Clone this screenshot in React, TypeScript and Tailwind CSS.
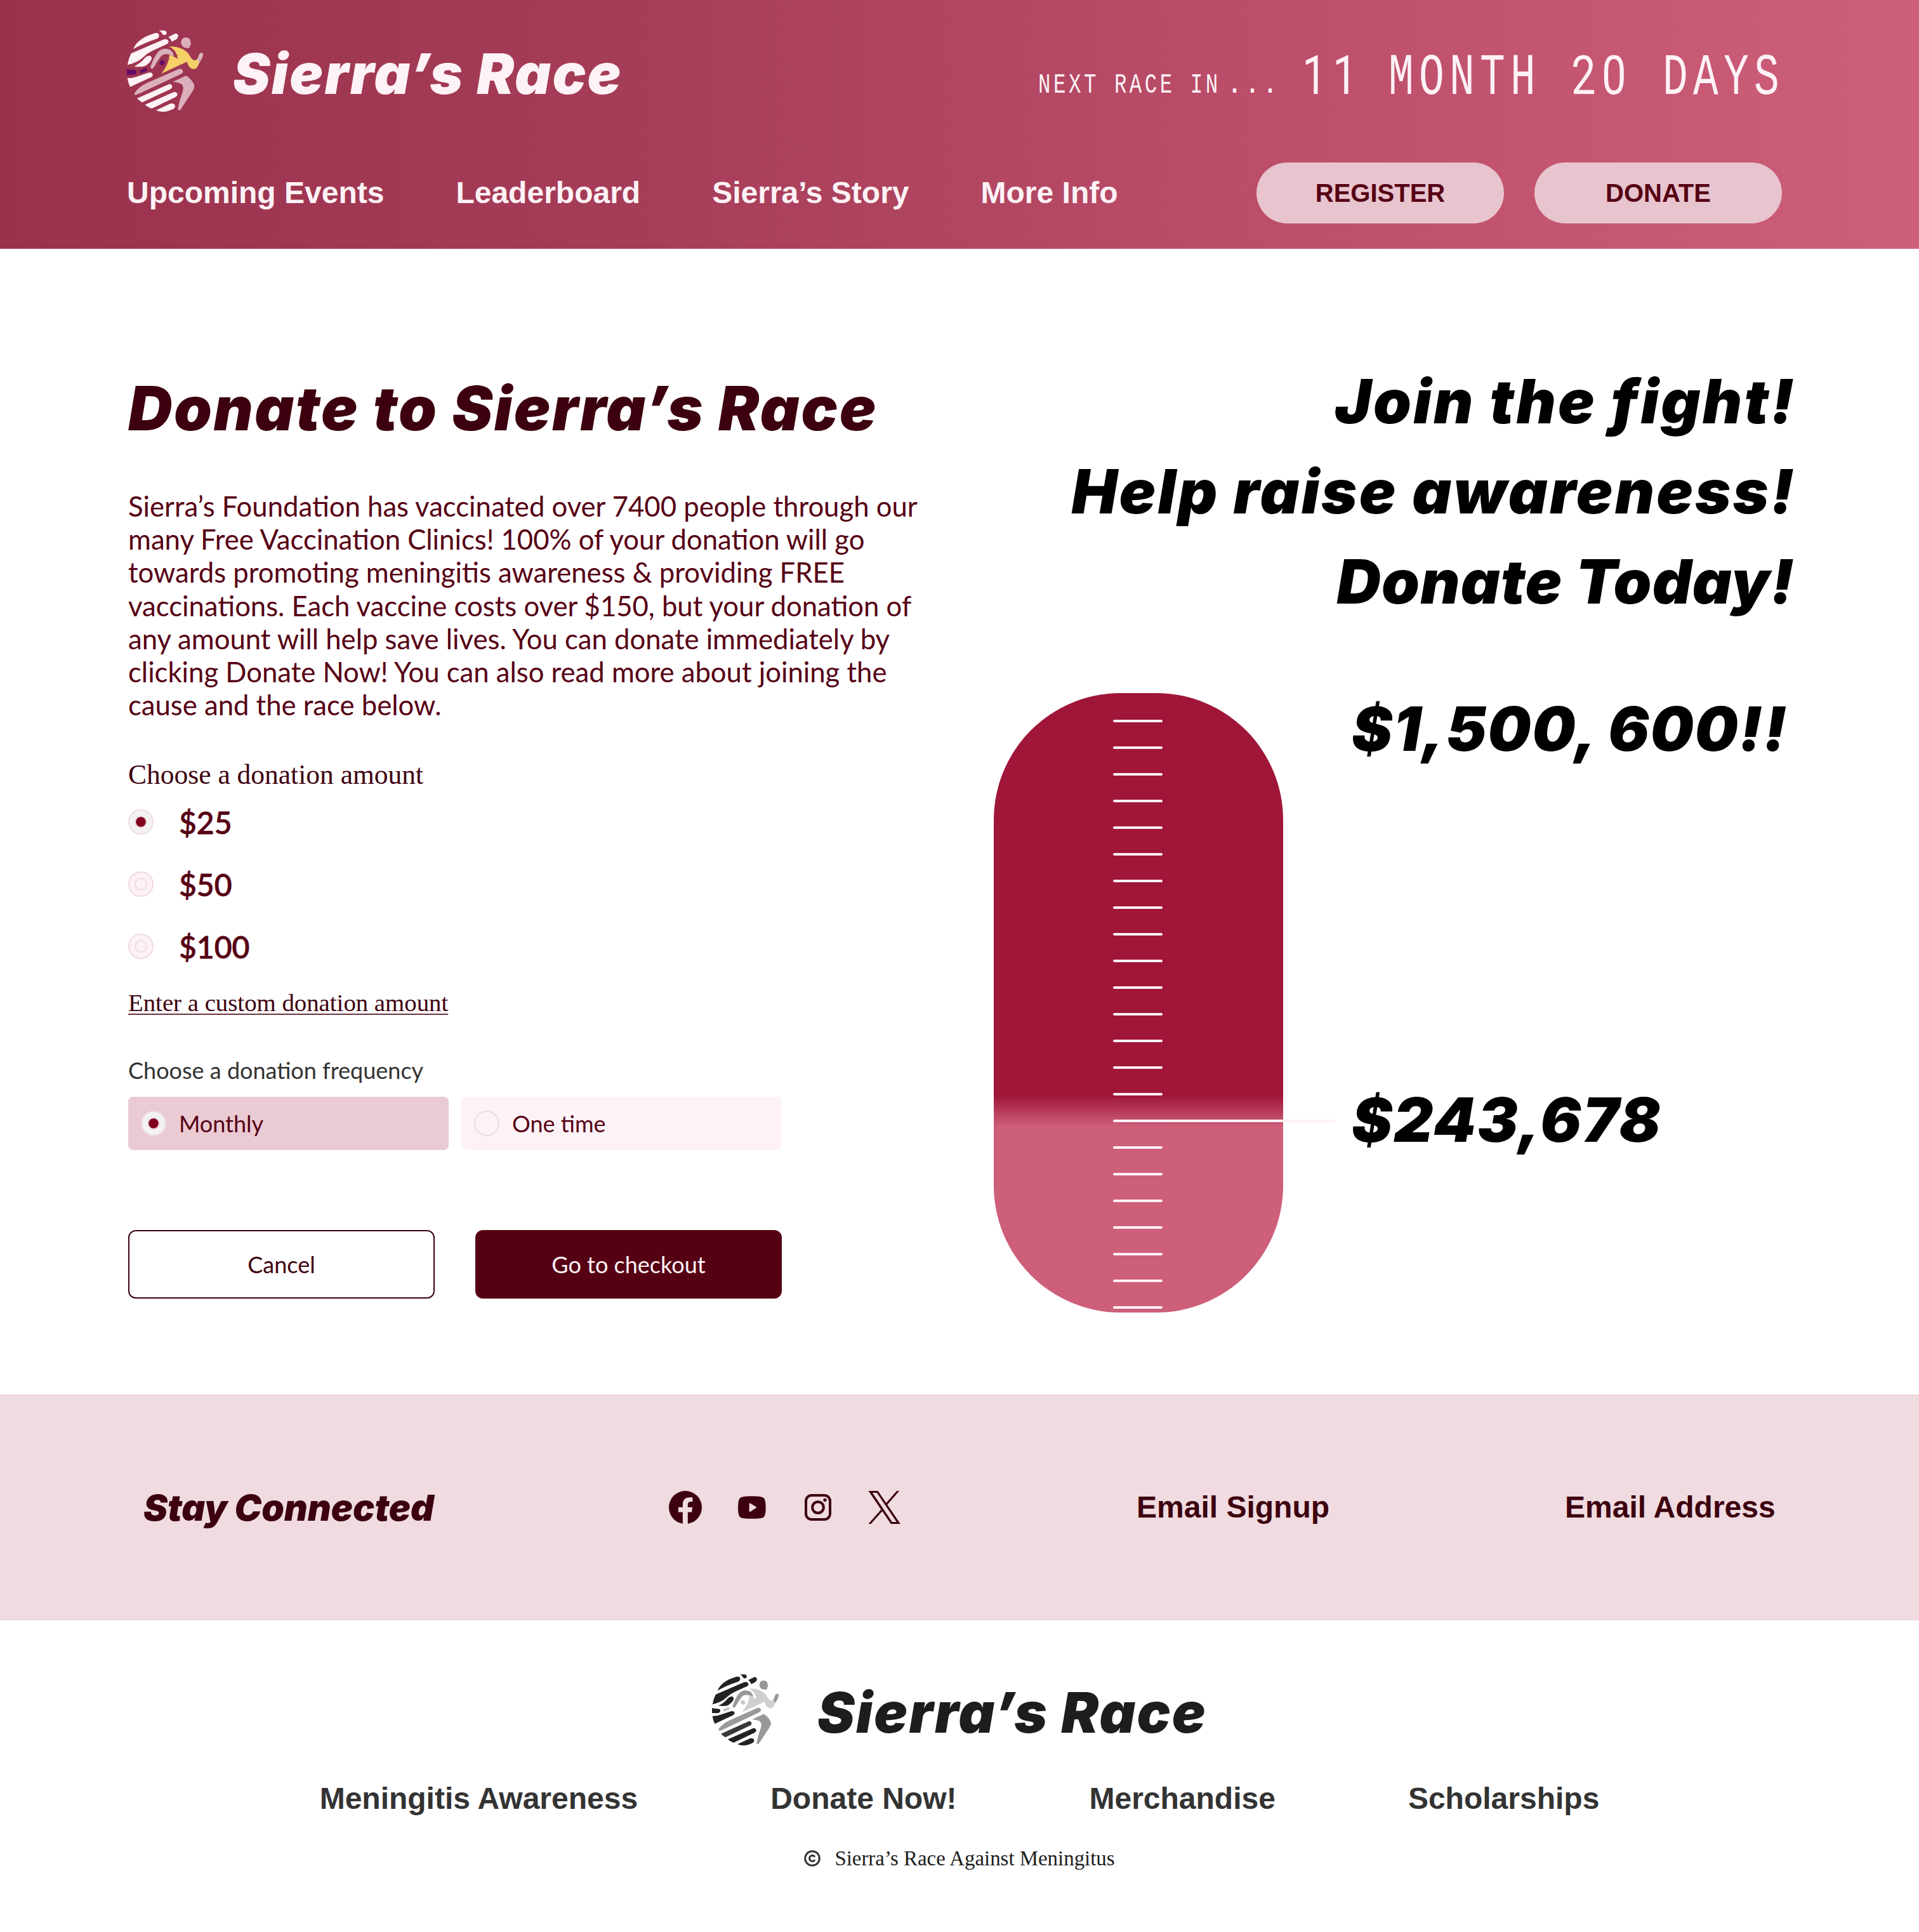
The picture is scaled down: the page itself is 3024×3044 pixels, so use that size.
type Palette = {
  stripe: string;
  lowerStripe: string;
  limb: string;
  shirt: string;
  band: string;
  mark: string;
};

const brandPalette: Palette = {
  stripe: "#FDF2F6",
  lowerStripe: "#FDF2F6",
  limb: "#DBB0BC",
  shirt: "#F5CF67",
  band: "#620D66",
  mark: "#620D66",
};

const grayPalette: Palette = {
  stripe: "#222222",
  lowerStripe: "#383838",
  limb: "#999999",
  shirt: "#CFCFCF",
  band: "#222222",
  mark: "#C6C6C6",
};

function RunnerLogo({ palette, className }: { palette: Palette; className: string }) {
  return (
    <svg viewBox="30 54 360 384" className={className} aria-hidden="true">
      <g fill={palette.stripe}>
        <path d="M182 55L205 54Q218 56 218 66Q216 76 207 76Q200 76 197 69Q192 60 182 55Z" />
        <path d="M226 85L258 69Q268 66 272 76Q274 90 262 97L242 107Q238 95 226 85Z" />
        <path d="M60 142Q80 90 165 66Q180 64 182 76Q183 88 172 93Q110 113 60 142Z" />
        <path d="M33 217Q36 190 50 163L205 96Q222 92 227 105Q228 114 218 119L150 150Q125 162 105 182Q85 203 33 217Z" />
        <path d="M64 224Q95 208 110 190Q120 174 138 173Q148 176 147 188Q140 208 115 222Q95 228 64 224Z" />
        <path d="M32 279Q60 280 85 269L135 253Q150 251 152 264Q152 272 142 276L45 321Q35 300 32 279Z" />
        <path d="M115 405L252 345Q267 343 269 357Q268 364 260 369L147 423Q130 417 115 405Z" />
        <path d="M168 431L235 400Q254 396 258 410Q258 422 245 427Q220 440 195 438Q180 437 168 431Z" />
      </g>
      <path fill={palette.lowerStripe} d="M78 375L228 308Q243 306 244 320Q243 329 234 332L102 394Q88 386 78 375Z" />
      <g fill={palette.limb}>
        <path d="M66 350Q85 320 130 300L275 236Q292 232 295 247Q295 255 285 260L90 352Q75 360 66 358Z" />
        <path d="M246 297L310 268Q340 288 349 315Q349 330 340 342L285 426Q278 435 271 428Q274 400 293 345Q302 315 285 305Q265 298 246 297Z" />
        <path d="M141 228Q155 180 180 152Q205 132 235 146Q250 158 252 175Q240 172 232 168Q202 160 188 180Q170 205 156 230Q145 240 141 228Z" />
        <path d="M361 192L373 164Q380 155 389 162Q392 170 386 184L370 212Z" />
        <path d="M309 87Q332 88 331 112L334 120L328 124L327 136Q308 138 300 134Q285 126 286 108Q288 88 309 87Z" />
      </g>
      <path fill={palette.shirt} d="M230 130Q290 128 322 165Q335 190 348 196Q358 195 362 190L371 208Q365 236 345 237Q322 234 314 202L193 258Q228 215 232 168Q255 178 270 188Q268 150 230 130Z" />
      <path fill={palette.band} d="M30 236Q45 240 60 240Q75 240 75 251Q74 262 58 264L30 263Z" />
      <path stroke={palette.mark} strokeWidth="15" strokeLinecap="round" d="M98 248L118 239" />
      <circle cx="197" cy="206" r="12" fill={palette.mark} />
    </svg>
  );
}

function FacebookIcon() {
  return (
    <svg viewBox="102 119 157 157" className="size-[52px]" aria-hidden="true">
      <circle cx="180.500" cy="197.500" r="78.500" fill="#3D000F" />
      <path fill="#EFDBE0" d="M168 277V220H147V197H168V185Q168 150 200 150H215V170H203Q192 171 192 185V197H214L211 220H192V277Z" />
    </svg>
  );
}

function YoutubeIcon() {
  return (
    <svg viewBox="429 144 132 107" className="h-[36px] w-[44px]" aria-hidden="true">
      <path fill="#3D000F" fillRule="evenodd" d="M429 198Q429 162 438 153Q446 144 495 144Q543 144 551 153Q560 162 560 198Q560 234 551 243Q543 251 495 251Q446 251 438 243Q429 234 429 198ZM482 180V216Q483 220 487 218L515 200Q518 198 515 195L487 178Q483 176 482 180Z" />
    </svg>
  );
}

function InstagramIcon() {
  return (
    <svg viewBox="745 135 126 126" className="size-[42px]" fill="none" stroke="#3D000F" aria-hidden="true">
      <rect x="751" y="141" width="114" height="114" rx="27" strokeWidth="12" />
      <circle cx="808" cy="198" r="26.500" strokeWidth="12" />
      <circle cx="841" cy="163" r="8" fill="#3D000F" stroke="none" />
    </svg>
  );
}

function XIcon() {
  return (
    <svg viewBox="1045 120 152 156" className="h-[52px] w-[51px]" fill="#3D000F" aria-hidden="true">
      <path fillRule="evenodd" d="M1046 120H1091L1197 276H1152ZM1065 129L1158 267H1179L1086 129Z" />
      <path d="M1180 120H1192L1134 187L1128 179ZM1046 276H1058L1116 211L1110 203Z" />
    </svg>
  );
}

function CopyrightIcon() {
  return (
    <svg viewBox="0 0 26 26" className="size-[26px]" fill="none" stroke="#333333" strokeWidth="3" aria-hidden="true">
      <circle cx="13" cy="13" r="11.300" />
      <path d="M17 10.800A4.500 4.500 0 1 0 17 15.200" />
    </svg>
  );
}

function Radio({ checked, ring }: { checked?: boolean; ring?: boolean }) {
  return (
    <span
      className={
        checked
          ? "flex size-10 shrink-0 items-center justify-center rounded-full border-2 border-[#EFDBE0] bg-[#F2F2F2]"
          : "flex size-10 shrink-0 items-center justify-center rounded-full border-2 border-[#EFDBE0] bg-[#FDF2F6]"
      }
    >
      {checked && <span className="size-5 rounded-full border-2 border-[#EFDBE0] bg-[#80001E] bg-clip-padding" />}
      {ring && <span className="size-5 rounded-full border-2 border-[#EFDBE0]" />}
    </span>
  );
}

function Countdown() {
  return (
    <div className="flex font-['Liberation_Mono',monospace] text-[#FDF2F6]">
      <div className="mt-[52px] flex h-[70px] w-[408px] text-[45px] leading-[70px]">
        <span className="w-[296px] whitespace-nowrap">
          <span className="inline-block origin-left scale-x-[0.72] tracking-[6.300px]">NEXT RACE IN</span>
        </span>
        <span className="tracking-[1px]">...</span>
      </div>
      <div className="mt-[21px] flex h-[100px] items-baseline gap-12 whitespace-nowrap text-[92px] leading-[100px]">
        <span className="w-24 pl-2 font-['Roboto',sans-serif] text-[86px] font-normal">
          <span className="inline-block origin-left scale-x-[0.8] tracking-[11.700px]">11</span>
        </span>
        <span className="w-60">
          <span className="inline-block origin-left scale-x-[0.72] tracking-[11.460px]">MONTH</span>
        </span>
        <span className="w-24 font-['Roboto',sans-serif] text-[86px] font-normal">
          <span className="inline-block origin-left scale-x-[0.8] tracking-[11.700px]">20</span>
        </span>
        <span className="w-48">
          <span className="inline-block origin-left scale-x-[0.72] tracking-[11.460px]">DAYS</span>
        </span>
      </div>
    </div>
  );
}

const navItems = ["Upcoming Events", "Leaderboard", "Sierra’s Story", "More Info"];

function Header() {
  return (
    <header className="h-[392px] bg-[linear-gradient(90deg,#9B324D_0%,#A63D58_33%,#BD4F6B_68%,#CE5F7B_100%)] px-[200px] pt-12">
      <div className="flex h-32 justify-between">
        <div className="flex items-center">
          <RunnerLogo palette={brandPalette} className="h-32 w-[120px]" />
          <span className="mt-2 ml-[47px] font-['Inter',sans-serif] text-[88px] leading-[96px] font-black tracking-[2.250px] whitespace-nowrap text-[#FDF2F6] italic">
            Sierra’s Race
          </span>
        </div>
        <div className="mr-3">
          <Countdown />
        </div>
      </div>
      <div className="mt-20 flex h-24 items-center justify-between pr-4">
        <nav className="flex gap-[113px] text-[48px] font-bold text-[#FDF2F6]">
          {navItems.map((item) => (
            <a key={item}>{item}</a>
          ))}
        </nav>
        <div className="flex gap-12 text-[40px] font-bold text-[#560014]">
          <button className="h-24 w-[390px] rounded-full bg-[#E8C4CE]">REGISTER</button>
          <button className="h-24 w-[390px] rounded-full bg-[#E8C4CE]">DONATE</button>
        </div>
      </div>
    </header>
  );
}

function DonateForm() {
  return (
    <section className="w-[1260px] pt-[203px] font-['Lato',sans-serif] text-[#560014]">
      <h1 className="font-['Inter',sans-serif] text-[96px] leading-[96px] font-black tracking-[2.550px] whitespace-nowrap text-[#3D000F] italic">
        Donate to Sierra’s Race
      </h1>
      <p className="mt-20 text-[43.650px] leading-[52.200px] whitespace-pre-line">
        {`Sierra’s Foundation has vaccinated over 7400 people through our
many Free Vaccination Clinics! 100% of your donation will go
towards promoting meningitis awareness & providing FREE
vaccinations. Each vaccine costs over $150, but your donation of
any amount will help save lives. You can donate immediately by
clicking Donate Now! You can also read more about joining the
cause and the race below.`}
      </p>
      <h2 className="mt-[60px] font-['Liberation_Serif',serif] text-[43.500px] leading-[48px] text-[#3D000F]">
        Choose a donation amount
      </h2>
      <div className="mt-[31px] flex flex-col gap-[58px] text-[48px] font-medium [-webkit-text-stroke:0.8px_#560014]">
        {["$25", "$50", "$100"].map((amount, i) => (
          <label key={amount} className="flex h-10 items-center gap-10">
            <Radio checked={i === 0} ring={i !== 0} />
            <span className="pt-0.5">{amount}</span>
          </label>
        ))}
      </div>
      <div className="mt-[47px] font-['Liberation_Serif',serif] text-[38.800px] leading-[44px] text-[#3D000F] underline decoration-[#6B3340] decoration-2 underline-offset-4">
        Enter a custom donation amount
      </div>
      <h3 className="mt-[62px] text-[36px] leading-[44px] text-[#333333]">Choose a donation frequency</h3>
      <div className="mt-5 flex gap-5 text-[36px]">
        <label className="flex h-[84px] w-[505px] items-center gap-5 rounded-lg bg-[#EACAD3] pl-5">
          <Radio checked />
          Monthly
        </label>
        <label className="flex h-[84px] w-[505px] items-center gap-5 rounded-lg bg-[#FDF2F6] pl-5">
          <Radio />
          One time
        </label>
      </div>
      <div className="mt-[126px] flex gap-16 text-[36px]">
        <button className="h-[108px] w-[483px] rounded-xl border-2 border-[#3D000F] text-[#3D000F]">Cancel</button>
        <button className="h-[108px] w-[483px] rounded-xl bg-[#560014] text-[#FDF2F6]">Go to checkout</button>
      </div>
    </section>
  );
}

const tickCount = 23;
const currentTick = 15;

function Thermometer() {
  return (
    <div className="flex h-[976px] w-[456px] flex-col gap-[38px] rounded-[200px] bg-[linear-gradient(180deg,#A01639_65%,#CD5F7A_70%)] pt-[42px] pl-[188px]">
      {Array.from({ length: tickCount }, (_, i) => (
        <span
          key={i}
          className={
            i === currentTick
              ? "h-1 w-[350px] shrink-0 rounded-full bg-[#FDF2F6]"
              : "h-1 w-[78px] shrink-0 rounded-full bg-[#FDF2F6]"
          }
        />
      ))}
    </div>
  );
}

function Progress() {
  return (
    <section className="w-[1264px] pt-[169px] font-['Inter',sans-serif] text-[96px] font-black whitespace-nowrap text-black italic">
      <div className="flex flex-col items-end leading-[142px]">
        <p className="tracking-[3.300px]">Join the fight!</p>
        <p className="tracking-[3.200px]">Help raise awareness!</p>
        <p className="pr-0.5 tracking-[1.200px]">Donate Today!</p>
      </div>
      <div className="mt-[105px] flex gap-[108px] leading-[96px]">
        <Thermometer />
        <div className="flex flex-col pt-2">
          <p className="tracking-[1.750px]">$1,500, 600!!</p>
          <p className="mt-[520px] tracking-[2px]">$243,678</p>
        </div>
      </div>
    </section>
  );
}

function StayConnected() {
  return (
    <section className="flex h-[356px] items-center bg-[#EFDBE0] pl-[226px] text-[48px] font-bold text-[#3D000F]">
      <h2 className="w-[828px] pt-0.5 font-['Inter',sans-serif] text-[57px] font-black italic">Stay Connected</h2>
      <div className="flex w-[737px] items-center">
        <FacebookIcon />
        <span className="ml-[57px]">
          <YoutubeIcon />
        </span>
        <span className="ml-[61px]">
          <InstagramIcon />
        </span>
        <span className="ml-[58px]">
          <XIcon />
        </span>
      </div>
      <a className="w-[675px]">Email Signup</a>
      <a>Email Address</a>
    </section>
  );
}

const footerLinks = ["Meningitis Awareness", "Donate Now!", "Merchandise", "Scholarships"];

function Footer() {
  return (
    <footer className="flex h-[491px] flex-col items-center bg-white pt-[85px]">
      <div className="flex h-28 items-center">
        <RunnerLogo palette={grayPalette} className="h-28 w-[105px]" />
        <span className="mt-2 ml-[61px] font-['Inter',sans-serif] text-[88px] leading-[96px] font-black tracking-[2.250px] whitespace-nowrap text-[#1D1D1D] italic">
          Sierra’s Race
        </span>
      </div>
      <nav className="mt-14 flex gap-[209px] text-[48px] leading-[56px] font-bold text-[#333333]">
        {footerLinks.map((item) => (
          <a key={item}>{item}</a>
        ))}
      </nav>
      <div className="mt-[46px] flex h-10 items-center gap-[22px] font-['Liberation_Serif',serif] text-[32.900px] leading-10 text-[#1D1D1D]">
        <CopyrightIcon />
        Sierra’s Race Against Meningitus
      </div>
    </footer>
  );
}

export default function App() {
  return (
    <div className="w-[3024px] bg-white font-['Liberation_Sans',Arial,sans-serif]">
      <Header />
      <main className="flex h-[1805px] pl-[202px]">
        <div className="w-[1364px]">
          <DonateForm />
        </div>
        <Progress />
      </main>
      <StayConnected />
      <Footer />
    </div>
  );
}
